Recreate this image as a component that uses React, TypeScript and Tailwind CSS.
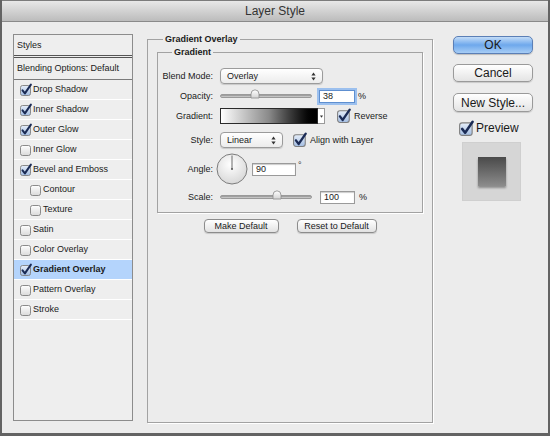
import React from "react";

function Box({ checked = false, s = 12 }: { checked?: boolean; s?: number }) {
  return (
    <svg width={s} height={s} viewBox="0 0 12 12" className="shrink-0 overflow-visible">
      <defs>
        <linearGradient id="cbU" x1="0" y1="0" x2="0" y2="1">
          <stop offset="0" stopColor="#ffffff" />
          <stop offset="1" stopColor="#dadada" />
        </linearGradient>
        <linearGradient id="cbC" x1="0" y1="0" x2="0" y2="1">
          <stop offset="0" stopColor="#e6eef9" />
          <stop offset="1" stopColor="#a3bde2" />
        </linearGradient>
      </defs>
      <rect x="0.5" y="1.5" width="10" height="10" rx="2" fill={checked ? "url(#cbC)" : "url(#cbU)"} stroke="#7f7f7f" strokeWidth="0.9" />
      {checked && (
        <path d="M2.5 6.3 L4.9 9.4 L10.9 0.6" fill="none" stroke="#1b2b55" strokeWidth="2" strokeLinecap="round" strokeLinejoin="round" />
      )}
    </svg>
  );
}

function Arrows() {
  return (
    <svg width="5" height="9" viewBox="0 0 5 9" className="shrink-0">
      <path d="M2.5 0.6 L4.6 3.4 L0.4 3.4 Z" fill="#333" />
      <path d="M0.4 5.6 L4.6 5.6 L2.5 8.4 Z" fill="#333" />
    </svg>
  );
}

function Thumb() {
  return (
    <svg width="10" height="10" viewBox="0 0 10 10">
      <defs>
        <linearGradient id="thG" x1="0" y1="0" x2="0" y2="1">
          <stop offset="0" stopColor="#ffffff" />
          <stop offset="1" stopColor="#d4d4d4" />
        </linearGradient>
      </defs>
      <path d="M1 9 L1 5 Q1 1 5 0.8 Q9 1 9 5 L9 9 Z" fill="url(#thG)" stroke="#8c8c8c" strokeWidth="0.8" />
    </svg>
  );
}

function Slider({ thumbLeft }: { thumbLeft: "a" | "b" }) {
  return (
    <div className="relative w-[92px] h-[12px] flex items-center">
      <div className="w-full h-[4px] rounded-full bg-gradient-to-b from-[#8f8f8f] to-[#d6d6d6] border border-[#9a9a9a]" />
      <div className={thumbLeft === "a" ? "absolute left-[30px] top-[-1px]" : "absolute left-[52px] top-[-1px]"}>
        <Thumb />
      </div>
    </div>
  );
}

function Select({ label, w }: { label: string; w: string }) {
  return (
    <div className={`${w} h-[16px] flex items-center justify-between pl-[6px] pr-[6px] rounded-[4px] border border-[#9b9b9b] bg-gradient-to-b from-white to-[#ececec] shadow-[0_1px_1px_rgba(0,0,0,0.15)]`}>
      <span>{label}</span>
      <Arrows />
    </div>
  );
}

function Input({ value, w, focus = false }: { value: string; w: string; focus?: boolean }) {
  return (
    <div
      className={`${w} h-[13px] flex items-center pl-[3px] bg-white border ${
        focus ? "border-[#5e8fd0] shadow-[0_0_0_2px_#9cc0ee]" : "border-[#9a9a9a] shadow-[inset_0_1px_1px_rgba(0,0,0,0.2)]"
      }`}
    >
      {value}
    </div>
  );
}

function Dial() {
  return (
    <svg width="32" height="32" viewBox="0 0 32 32" className="shrink-0">
      <defs>
        <radialGradient id="dialG" cx="0.45" cy="0.35" r="0.7">
          <stop offset="0" stopColor="#ffffff" />
          <stop offset="1" stopColor="#d5d5d5" />
        </radialGradient>
      </defs>
      <circle cx="16" cy="16" r="15" fill="url(#dialG)" stroke="#7c7c7c" strokeWidth="1" />
      <line x1="16" y1="16" x2="16" y2="2.5" stroke="#6a6a6a" strokeWidth="1" />
      <circle cx="16" cy="16" r="1" fill="#555" />
    </svg>
  );
}

const items: { label: string; checked: boolean; sub?: boolean; selected?: boolean }[] = [
  { label: "Drop Shadow", checked: true },
  { label: "Inner Shadow", checked: true },
  { label: "Outer Glow", checked: true },
  { label: "Inner Glow", checked: false },
  { label: "Bevel and Emboss", checked: true },
  { label: "Contour", checked: false, sub: true },
  { label: "Texture", checked: false, sub: true },
  { label: "Satin", checked: false },
  { label: "Color Overlay", checked: false },
  { label: "Gradient Overlay", checked: true, selected: true },
  { label: "Pattern Overlay", checked: false },
  { label: "Stroke", checked: false },
];

function Label({ children, w = "w-[55px]" }: { children: React.ReactNode; w?: string }) {
  return <div className={`${w} shrink-0 text-right`}>{children}</div>;
}

export default function App() {
  return (
    <div className="w-[550px] h-[436px] flex flex-col bg-[#ececec] border-x-2 border-b-[3px] border-[#636363] font-['Liberation_Sans',Arial,sans-serif] text-[9px] leading-[11px] text-[#1a1a1a] overflow-hidden">
      <div className="h-[22px] shrink-0 flex items-center justify-center bg-gradient-to-b from-[#e8e8e8] to-[#bcbcbc] border-t border-t-[#7c7c7c] border-b border-b-[#8a8a8a] text-[12px] text-[#333]">
        Layer Style
      </div>

      <div className="flex items-start pt-[12px] pl-[11px]">
        {/* Left styles list */}
        <div className="w-[120px] h-[387px] shrink-0 flex flex-col border border-[#8c8c8c] bg-[#eeeeee]">
          <div className="h-[23px] flex items-center pl-[3px] border-b-[3px] border-double border-[#555]">Styles</div>
          <div className="h-[22px] flex items-center pl-[3px] border-b border-[#7a7a7a]">Blending Options: Default</div>
          {items.map((it) => (
            <div
              key={it.label}
              className={`h-[20px] flex items-center border-b border-white ${it.sub ? "pl-[16px]" : "pl-[6px]"} ${
                it.selected ? "bg-[#b4d4fc] font-bold" : ""
              }`}
            >
              <Box checked={it.checked} />
              <span className="ml-[1px]">{it.label}</span>
            </div>
          ))}
        </div>

        {/* Middle settings */}
        <fieldset className="ml-[14px] w-[286px] h-[389px] shrink-0 border border-[#a2a2a2] shadow-[1px_1px_0_#fff]">
          <legend className="ml-[15px] px-[2px] font-bold">Gradient Overlay</legend>
          <div className="px-[9px] pt-[2px]">
            <fieldset className="h-[166px] border border-[#a2a2a2] shadow-[1px_1px_0_#fff]">
              <legend className="ml-[14px] px-[2px] font-bold">Gradient</legend>
              <div className="flex flex-col">
                <div className="h-[18px] mt-[9px] flex items-center">
                  <Label>Blend Mode:</Label>
                  <div className="ml-[7px]">
                    <Select label="Overlay" w="w-[103px]" />
                  </div>
                </div>
                <div className="h-[18px] mt-[2px] flex items-center">
                  <Label>Opacity:</Label>
                  <div className="ml-[7px]">
                    <Slider thumbLeft="a" />
                  </div>
                  <div className="ml-[7px]">
                    <Input value="38" w="w-[36px]" focus />
                  </div>
                  <span className="ml-[3px]">%</span>
                </div>
                <div className="h-[18px] mt-[2px] flex items-center">
                  <Label>Gradient:</Label>
                  <div className="ml-[7px] flex items-stretch h-[16px]">
                    <div className="w-[98px] border border-[#2a2a2a] bg-gradient-to-r from-white via-[#8a8a8a] to-black" />
                    <div className="w-[7px] flex items-center justify-center bg-white border border-l-0 border-[#9a9a9a]">
                      <svg width="3" height="3" viewBox="0 0 4 3">
                        <path d="M0 0 L4 0 L2 3 Z" fill="#333" />
                      </svg>
                    </div>
                  </div>
                  <div className="ml-[12px] flex items-center">
                    <Box checked s={14} />
                    <span className="ml-[3px]">Reverse</span>
                  </div>
                </div>
                <div className="h-[18px] mt-[6px] flex items-center">
                  <Label>Style:</Label>
                  <div className="ml-[7px]">
                    <Select label="Linear" w="w-[63px]" />
                  </div>
                  <div className="ml-[10px] flex items-center">
                    <Box checked s={14} />
                    <span className="ml-[3px]">Align with Layer</span>
                  </div>
                </div>
                <div className="h-[32px] mt-[4px] flex items-center">
                  <Label>Angle:</Label>
                  <div className="ml-[3px]">
                    <Dial />
                  </div>
                  <div className="ml-[4px]">
                    <Input value="90" w="w-[44px]" />
                  </div>
                  <span className="ml-[2px] self-start mt-[7px] text-[#333]">°</span>
                </div>
                <div className="h-[18px] mt-[3px] flex items-center">
                  <Label>Scale:</Label>
                  <div className="ml-[7px]">
                    <Slider thumbLeft="b" />
                  </div>
                  <div className="ml-[8px]">
                    <Input value="100" w="w-[35px]" />
                  </div>
                  <span className="ml-[4px]">%</span>
                </div>
              </div>
            </fieldset>
            <div className="mt-[6px] flex justify-center gap-[18px]">
              <div className="w-[75px] h-[14px] flex items-center justify-center rounded-[4px] border border-[#8c8c8c] bg-gradient-to-b from-white to-[#e2e2e2] shadow-[0_1px_1px_rgba(0,0,0,0.15)]">
                Make Default
              </div>
              <div className="w-[80px] h-[14px] flex items-center justify-center rounded-[4px] border border-[#8c8c8c] bg-gradient-to-b from-white to-[#e2e2e2] shadow-[0_1px_1px_rgba(0,0,0,0.15)]">
                Reset to Default
              </div>
            </div>
          </div>
        </fieldset>

        {/* Right column */}
        <div className="ml-[20px] w-[80px] shrink-0 flex flex-col pt-[2px] text-[12px] leading-[14px]">
          <div className="h-[18px] flex items-center justify-center rounded-[5px] border border-[#5b7fb6] bg-gradient-to-b from-[#c3dcf7] via-[#6ea8ec] to-[#a7cdf5] shadow-[0_1px_1px_rgba(0,0,0,0.2)]">
            OK
          </div>
          <div className="mt-[10px] h-[18px] flex items-center justify-center rounded-[5px] border border-[#9a9a9a] bg-gradient-to-b from-white to-[#e4e4e4] shadow-[0_1px_1px_rgba(0,0,0,0.15)]">
            Cancel
          </div>
          <div className="mt-[11px] h-[19px] flex items-center justify-center rounded-[5px] border border-[#9a9a9a] bg-gradient-to-b from-white to-[#e4e4e4] shadow-[0_1px_1px_rgba(0,0,0,0.15)]">
            New Style...
          </div>
          <div className="mt-[9px] h-[14px] flex items-center pl-[6px]">
            <Box checked s={15} />
            <span className="ml-[2px]">Preview</span>
          </div>
          <div className="mt-[7px] ml-[9px] w-[59px] h-[59px] flex items-center justify-center bg-[#d6d6d6] border border-[#cfcfcf]">
            <div className="w-[28px] h-[29px] bg-gradient-to-b from-[#4a4a4a] to-[#8c8c8c] shadow-[0_2px_2px_rgba(0,0,0,0.35)]" />
          </div>
        </div>
      </div>
    </div>
  );
}
